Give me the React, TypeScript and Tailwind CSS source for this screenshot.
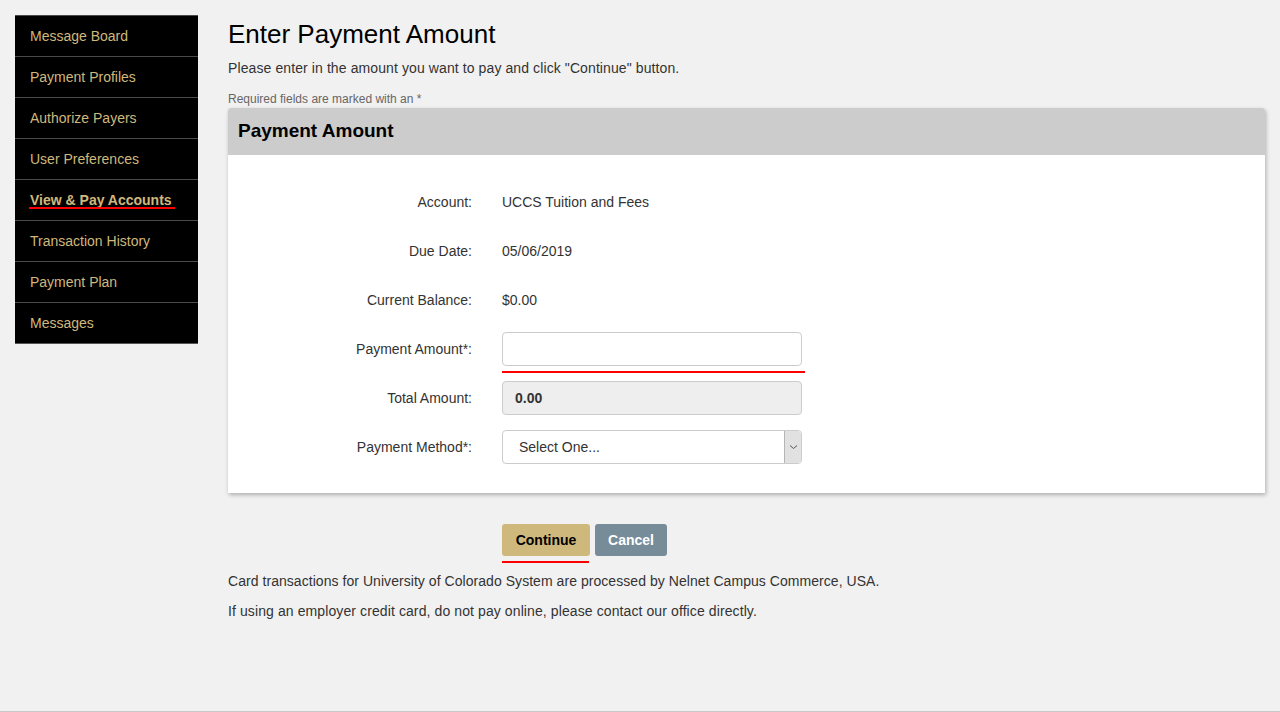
import React from "react";

const items = [
  "Message Board",
  "Payment Profiles",
  "Authorize Payers",
  "User Preferences",
  "View & Pay Accounts",
  "Transaction History",
  "Payment Plan",
  "Messages",
];

function Row({ label, children }: { label: string; children: React.ReactNode }) {
  return (
    <div className="flex items-center h-[34px]">
      <div className="w-[244px] text-right text-[14px] text-[#333]">{label}</div>
      <div className="ml-[30px] w-[300px] relative">{children}</div>
    </div>
  );
}

export default function App() {
  return (
    <div
      className="h-[712px] bg-[#f1f1f1] border-b border-[#c8c8c8] flex pt-[15px] pl-[15px] pr-[15px]"
      style={{ fontFamily: '"Liberation Sans", Arial, sans-serif' }}
    >
      <nav className="w-[183px] self-start bg-black border-b border-[#555]">
        {items.map((it) => {
          const active = it === "View & Pay Accounts";
          return (
            <div
              key={it}
              className="h-[41px] border-t border-[#4a4a4a] flex items-center pl-[15px] text-[14px] text-[#cfb87c]"
            >
              <span className={active ? "font-bold relative" : ""}>
                {it}
                {active && (
                  <span className="absolute left-[-1px] right-[-3px] top-[17px] h-[2px] bg-[#ff0000]" />
                )}
              </span>
            </div>
          );
        })}
      </nav>

      <main className="ml-[30px] flex-1">
        <h1 className="mt-[4px] text-[26px] leading-[30px] text-black">Enter Payment Amount</h1>
        <p className="mt-[9px] text-[14px] leading-[20px] text-[#333] tracking-[0.1px]">
          Please enter in the amount you want to pay and click "Continue" button.
        </p>
        <p className="mt-[13px] text-[12px] leading-[16px] text-[#666]">
          Required fields are marked with an *
        </p>

        <section className="mt-[1px] bg-white rounded-t-[3px] shadow-[1px_2px_4px_rgba(0,0,0,0.28)]">
          <div className="h-[47px] bg-[#cccccc] rounded-t-[3px] flex items-center pl-[10px]">
            <h2 className="text-[19px] font-bold text-black">Payment Amount</h2>
          </div>
          <div className="pt-[30px] pb-[29px] flex flex-col gap-[15px]">
            <Row label="Account:">
              <span className="text-[14px] text-[#333]">UCCS Tuition and Fees</span>
            </Row>
            <Row label="Due Date:">
              <span className="text-[14px] text-[#333]">05/06/2019</span>
            </Row>
            <Row label="Current Balance:">
              <span className="text-[14px] text-[#333]">$0.00</span>
            </Row>
            <Row label="Payment Amount*:">
              <input
                className="w-[300px] h-[34px] border border-[#ccc] rounded-[4px] bg-white px-[12px] text-[14px] outline-none"
                type="text"
              />
              <span className="absolute left-0 w-[303px] top-[39px] h-[2px] bg-[#ff0000]" />
            </Row>
            <Row label="Total Amount:">
              <div className="w-[300px] h-[34px] border border-[#ccc] rounded-[4px] bg-[#eeeeee] px-[12px] flex items-center text-[14px] font-bold text-[#333]">
                0.00
              </div>
            </Row>
            <Row label="Payment Method*:">
              <div className="w-[300px] h-[34px] border border-[#ccc] rounded-[4px] bg-white flex items-center overflow-hidden">
                <span className="flex-1 pl-[16px] text-[14px] text-[#333]">Select One...</span>
                <div className="w-[17px] h-[32px] bg-[#e1e1e1] border-l border-[#b5b5b5] flex items-center justify-center">
                  <svg width="9" height="6" viewBox="0 0 9 6">
                    <path d="M1 1.5 L4.5 4.5 L8 1.5" fill="none" stroke="#555" strokeWidth="1" />
                  </svg>
                </div>
              </div>
            </Row>
          </div>
        </section>

        <div className="mt-[31px] ml-[274px] flex gap-[5px]">
          <div className="relative">
            <button className="w-[88px] h-[32px] rounded-[3px] bg-[#cfb87c] text-black font-bold text-[14px]">
              Continue
            </button>
            <span className="absolute left-0 w-[87px] top-[37px] h-[2px] bg-[#ff0000]" />
          </div>
          <button className="w-[72px] h-[32px] rounded-[3px] bg-[#778c99] text-white font-bold text-[14px]">
            Cancel
          </button>
        </div>

        <p className="mt-[15px] text-[14px] leading-[20px] text-[#333] tracking-[0.05px]">
          Card transactions for University of Colorado System are processed by Nelnet Campus Commerce, USA.
        </p>
        <p className="mt-[10px] text-[14px] leading-[20px] text-[#333] tracking-[0.1px]">
          If using an employer credit card, do not pay online, please contact our office directly.
        </p>
      </main>
    </div>
  );
}
